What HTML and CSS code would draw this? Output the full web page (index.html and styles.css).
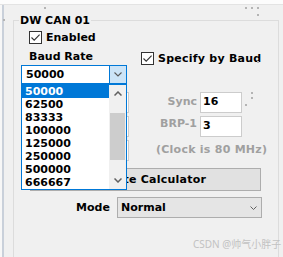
FILE: index.html
```html
<!DOCTYPE html>
<html>
<head>
<meta charset="utf-8">
<link rel="stylesheet" href="styles.css">
</head>
<body>
<div class="topband"></div>
<div class="workspace">
  <div class="rail"></div>
  <fieldset class="group">
    <legend class="legend">DW CAN 01</legend>
    <div class="check check-enabled">
      <span class="box"><svg width="11" height="11" viewBox="0 0 11 11"><path d="M1.5 5.5 L4.2 8.2 L9.6 2.6" fill="none" stroke="#333" stroke-width="1.1"/></svg></span>
      <span class="check-label">Enabled</span>
    </div>
    <div class="baud-row">
      <span class="label baud-label">Baud Rate</span>
      <div class="check check-specify">
        <span class="box"><svg width="11" height="11" viewBox="0 0 11 11"><path d="M1.5 5.5 L4.2 8.2 L9.6 2.6" fill="none" stroke="#333" stroke-width="1.1"/></svg></span>
        <span class="check-label wide">Specify by Baud</span>
      </div>
    </div>
    <div class="combo-wrap">
      <div class="combo combo-open">
        <span class="combo-text">50000</span>
        <span class="combo-btn"><svg width="8" height="5" viewBox="0 0 8 5"><path d="M0.5 0.5 L4 4 L7.5 0.5" fill="none" stroke="#5a5a5a" stroke-width="1.1"/></svg></span>
      </div>
      <div class="droplist">
        <ul class="items">
          <li class="item selected">50000</li>
          <li class="item">62500</li>
          <li class="item">83333</li>
          <li class="item">100000</li>
          <li class="item">125000</li>
          <li class="item">250000</li>
          <li class="item">500000</li>
          <li class="item">666667</li>
        </ul>
        <div class="scrollbar">
          <span class="sb-arrow"><svg width="8" height="5" viewBox="0 0 8 5"><path d="M0.5 4.5 L4 1 L7.5 4.5" fill="none" stroke="#606060" stroke-width="1.5"/></svg></span>
          <span class="sb-track"><span class="sb-thumb"></span></span>
          <span class="sb-arrow"><svg width="8" height="5" viewBox="0 0 8 5"><path d="M0.5 0.5 L4 4 L7.5 0.5" fill="none" stroke="#606060" stroke-width="1.5"/></svg></span>
        </div>
      </div>
    </div>
    <div class="timing">
      <span class="tb"></span>
      <span class="label dis sync-label">Sync</span>
      <span class="tb val">16</span>
      <span class="tb"></span>
      <span class="label dis brp-label">BRP-1</span>
      <span class="tb val">3</span>
      <span class="tb"></span>
      <span class="label dis clock wide">(Clock is 80 MHz)</span>
    </div>
    <button class="calc wide" type="button">Bit Rate Calculator</button>
    <div class="mode-row">
      <span class="label mode-label">Mode</span>
      <div class="combo combo-mode">
        <span class="combo-text">Normal</span>
        <svg width="7" height="4" viewBox="0 0 7 4"><path d="M0.5 0.5 L3.5 3.5 L6.5 0.5" fill="none" stroke="#606060" stroke-width="1"/></svg>
      </div>
    </div>
  </fieldset>
</div>
<div class="dots">
  <span class="dot d1"></span><span class="dot d2"></span><span class="dot d3"></span>
  <span class="dot d4"></span><span class="dot d5"></span><span class="dot d6"></span>
  <span class="dot d7"></span><span class="dot d8"></span><span class="dot d9"></span>
  <span class="dot d10"></span>
</div>
<div class="watermark">CSDN @帅气小胖子</div>
</body>
</html>
```

FILE: styles.css
```css
* { box-sizing: border-box; }
html, body { margin: 0; padding: 0; }
body {
  width: 283px;
  height: 257px;
  overflow: hidden;
  position: relative;
  background: #f0f0f0;
  font-family: "DejaVu Sans", sans-serif;
  font-weight: bold;
  font-size: 11px;
  line-height: 13px;
  color: #000;
}
.topband {
  height: 5px;
  background: #fcfcfc;
  border-bottom: 1px solid #e3e3e3;
}
.workspace {
  display: flex;
  height: 252px;
  overflow: hidden;
}
.rail {
  width: 4px;
  flex: none;
  background: linear-gradient(to right, #f7f7f7 0 2px, #c9d0da 2px 4px);
}
.group {
  margin: 9px 0 0 9px;
  padding: 0;
  width: 266px;
  height: 243px;
  flex: none;
  min-width: 0;
  border: 1px solid #dcdcdc;
  border-bottom-width: 0;
}
.legend {
  margin-left: 5px;
  padding: 0 1px;
  line-height: 13px;
}
.wide { letter-spacing: 0.25px; }
.check {
  display: flex;
  align-items: center;
  gap: 4px;
}
.box {
  width: 13px;
  height: 13px;
  flex: none;
  border: 1px solid #333;
  background: #fff;
  display: flex;
}
.check-enabled {
  margin: 4px 0 0 15px;
}
.baud-row {
  display: grid;
  grid-template-columns: 112px auto;
  align-items: start;
  padding-left: 15px;
}
.baud-label { margin-top: 6px; }
.check-specify { margin-top: 8px; }
.combo-wrap {
  position: relative;
  margin-left: 7px;
  width: 106px;
  height: 19px;
}
.combo {
  display: flex;
  align-items: center;
}
.combo-open {
  height: 19px;
  border: 1px solid #0078d7;
  background: #fff;
}
.combo-open .combo-text {
  padding-left: 4px;
  line-height: 17px;
}
.combo-btn {
  margin-left: auto;
  width: 17px;
  height: 17px;
  background: #cce4f7;
  border-left: 1px solid #0078d7;
  display: flex;
  align-items: center;
  justify-content: center;
}
.droplist {
  position: absolute;
  top: 19px;
  left: 0;
  width: 106px;
  height: 106px;
  border: 1px solid #0078d7;
  background: #fff;
  display: flex;
  z-index: 2;
}
.items {
  list-style: none;
  margin: 0;
  padding: 0;
  width: 87px;
}
.item {
  height: 13px;
  padding-left: 3px;
  line-height: 13px;
}
.item.selected {
  background: #0078d7;
  color: #fff;
}
.scrollbar {
  width: 17px;
  background: #f0f0f0;
  display: flex;
  flex-direction: column;
}
.sb-arrow {
  height: 17px;
  flex: none;
  display: flex;
  align-items: center;
  justify-content: center;
}
.sb-track {
  flex: 1;
}
.sb-thumb {
  display: block;
  margin: 11px 1px 0 1px;
  height: 47px;
  background: #cdcdcd;
}
.timing {
  margin-top: 8px;
  display: grid;
  grid-template-columns: 40px 71px 42px;
  grid-auto-rows: 21px;
  row-gap: 3px;
  padding-left: 75px;
}
.tb {
  border: 1px solid #cccccc;
  background: #fff;
}
.val {
  padding-left: 2px;
  line-height: 18px;
}
.label.dis { color: #a0a0a0; }
.sync-label, .brp-label {
  text-align: right;
  padding-right: 3px;
}
.sync-label { margin-top: 3px; }
.brp-label { margin-top: 1px; }
.clock {
  grid-column: 2 / span 2;
  margin: 3px 0 0 27px;
  white-space: nowrap;
}
.calc {
  display: block;
  margin: 7px 0 0 16px;
  width: 231px;
  height: 23px;
  padding: 0;
  border: 1px solid #adadad;
  background: #e1e1e1;
  font: inherit;
  letter-spacing: 0.25px;
  line-height: 21px;
  color: #000;
  text-align: center;
}
.mode-row {
  margin-top: 6px;
  padding-left: 62px;
  display: grid;
  grid-template-columns: 41px 145px;
  align-items: center;
}
.combo-mode {
  height: 21px;
  border: 1px solid #adadad;
  background: #e5e5e5;
  justify-content: space-between;
  padding: 0 4px 0 3px;
}
.dots .dot {
  position: absolute;
  width: 2px;
  height: 2px;
  background: #b4b4b4;
}
.d1 { left: 44px; top: 7px; }
.d2 { left: 245px; top: 7px; }
.d3 { left: 251px; top: 7px; }
.d4 { left: 257px; top: 7px; }
.d5 { left: 257px; top: 14px; }
.d6 { left: 3px; top: 19px; }
.d7 { left: 251px; top: 92px; }
.d8 { left: 251px; top: 97px; }
.d9 { left: 245px; top: 104px; }
.d10 { left: 257px; top: 61px; }
.watermark {
  position: absolute;
  left: 193px;
  top: 238px;
  font-family: "Noto Sans", "Noto Sans CJK SC", sans-serif;
  font-weight: normal;
  font-size: 10px;
  line-height: 12px;
  color: #c2c2c2;
  white-space: nowrap;
}
```
